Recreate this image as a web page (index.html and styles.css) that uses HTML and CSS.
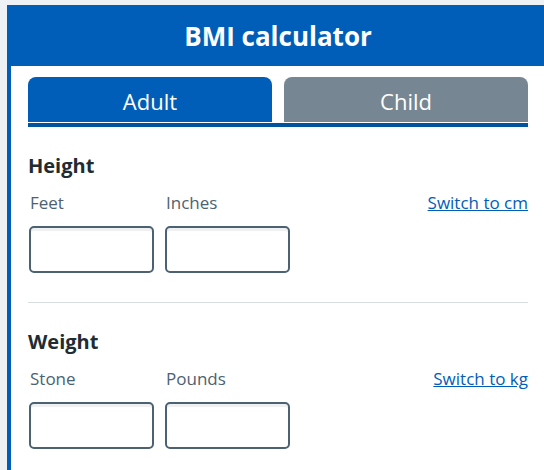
FILE: index.html
```html
<!DOCTYPE html>
<html lang="en">
<head>
<meta charset="utf-8">
<title>BMI calculator</title>
<link rel="stylesheet" href="styles.css">
</head>
<body>
<div class="panel">
  <h1 class="title">BMI calculator</h1>
  <div class="content">
    <div class="tabs">
      <button class="tab tab-active">Adult</button>
      <button class="tab">Child</button>
    </div>
    <section class="group group-first">
      <h2 class="heading">Height</h2>
      <div class="fields">
        <div class="field">
          <label class="label" for="feet">Feet</label>
          <input class="input" id="feet" type="text">
        </div>
        <div class="field">
          <label class="label" for="inches">Inches</label>
          <input class="input" id="inches" type="text">
        </div>
        <a class="switch" href="#">Switch to cm</a>
      </div>
    </section>
    <hr class="divider">
    <section class="group group-second">
      <h2 class="heading">Weight</h2>
      <div class="fields">
        <div class="field">
          <label class="label" for="stone">Stone</label>
          <input class="input" id="stone" type="text">
        </div>
        <div class="field">
          <label class="label" for="pounds">Pounds</label>
          <input class="input" id="pounds" type="text">
        </div>
        <a class="switch" href="#">Switch to kg</a>
      </div>
    </section>
  </div>
</div>
</body>
</html>
```

FILE: styles.css
```css
html, body {
  margin: 0;
  padding: 0;
  overflow: hidden;
}
body {
  background: #eef2f4;
  font-family: "Open Sans", "Noto Sans", sans-serif;
  color: #212b32;
  width: 544px;
  height: 470px;
}
.panel {
  box-sizing: border-box;
  margin: 5px 0 0 7px;
  width: 542px;
  height: 465px;
  border-left: 4px solid #005eb8;
  border-right: 4px solid #005eb8;
  background: #ffffff;
}
.title {
  margin: 0;
  background: #005eb8;
  color: #ffffff;
  font-size: 26px;
  font-weight: 700;
  line-height: 62px;
  height: 61px;
  text-align: center;
}
.content {
  padding: 11px 17px 0;
}
.tabs {
  display: grid;
  grid-template-columns: 1fr 1fr;
  column-gap: 12px;
  padding-bottom: 1px;
  border-bottom: 4px solid #00539f;
}
.tab {
  height: 45px;
  border: 0;
  border-radius: 8px 8px 0 0;
  background: #768692;
  color: #ffffff;
  font-family: inherit;
  font-size: 22px;
  font-weight: 400;
  padding: 2px 0 0;
}
.tab-active {
  background: #005eb8;
}
.group-first {
  padding-top: 27px;
}
.group-second {
  padding-top: 27px;
}
.heading {
  margin: 0 0 13px;
  font-size: 20px;
  font-weight: 700;
  line-height: 24px;
  color: #212b32;
}
.fields {
  display: grid;
  grid-template-columns: 125px 125px 1fr;
  column-gap: 11px;
  padding-left: 1px;
}
.field {
  display: flex;
  flex-direction: column;
  gap: 11px;
}
.label {
  font-size: 17px;
  line-height: 24px;
  color: #4c6272;
  padding-left: 1px;
}
.input {
  box-sizing: border-box;
  width: 125px;
  height: 47px;
  margin: 0;
  border: 2px solid #4c6272;
  border-radius: 5px;
  background: #ffffff;
  box-shadow: inset 0 3px 0 #eef0f2;
  font-family: inherit;
  font-size: 16px;
}
.switch {
  justify-self: end;
  align-self: start;
  font-size: 17px;
  line-height: 24px;
  color: #005eb8;
  text-decoration: underline;
}
.divider {
  margin: 29px 0 0;
  border: 0;
  border-top: 1px solid #d8dde0;
  height: 0;
}
```
